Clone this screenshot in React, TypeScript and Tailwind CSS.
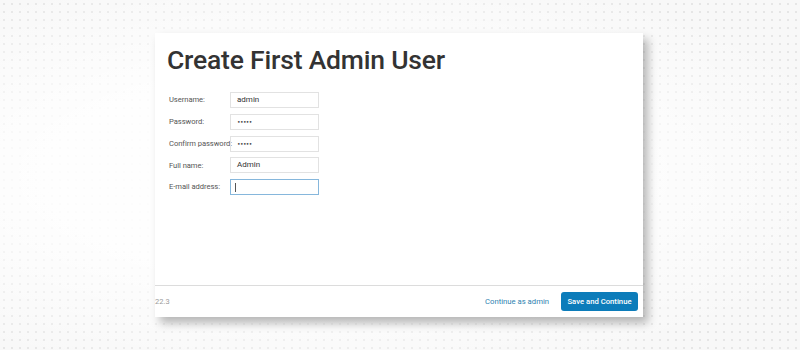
import React from "react";

const rows = [
  { label: "Username:", value: "admin" },
  { label: "Password:", value: "•••••", pw: true },
  { label: "Confirm password:", value: "•••••", pw: true },
  { label: "Full name:", value: "Admin" },
  { label: "E-mail address:", value: "", focus: true },
];

export default function App() {
  return (
    <div
      className="w-[800px] h-[350px] overflow-hidden flex flex-col bg-[#f8f8f8] bg-[radial-gradient(ellipse_70%_60%_at_40%_50%,rgba(255,255,255,1),rgba(255,255,255,0.85)_50%,rgba(255,255,255,0)_100%),radial-gradient(circle,#e6e6e6_1px,transparent_1.4px)] bg-[length:100%_100%,8px_8px]"
      style={{ fontFamily: "Roboto, 'Liberation Sans', Arial, sans-serif" }}
    >
      <div className="ml-[155px] mt-[33px] w-[488px] h-[284px] bg-white shadow-[5px_6px_9px_rgba(0,0,0,0.28)] flex flex-col">
        <div className="flex-1 flex flex-col">
          <h1 className="mt-[10px] ml-[12px] text-[26.5px] leading-[34px] font-medium text-[#333] tracking-[-0.2px] whitespace-nowrap">
            Create First Admin User
          </h1>
          <div className="mt-[15px] ml-[14px] flex flex-col gap-[5.75px]">
            {rows.map((r) => (
              <div key={r.label} className="flex items-center h-[16px]">
                <div className="w-[61px] text-[7.6px] text-[#555] whitespace-nowrap tracking-[-0.05px]">
                  {r.label}
                </div>
                <div
                  className={
                    r.focus
                      ? "w-[89px] h-[16px] border border-[#86b7dc] flex items-center pl-[4px]"
                      : "w-[89px] h-[16px] border border-[#e2e2e2] flex items-center pl-[6px]"
                  }
                >
                  {r.focus ? (
                    <span className="block w-px h-[9px] bg-[#555]" />
                  ) : r.pw ? (
                    <span
                      className="text-[6px] leading-none text-[#444] tracking-[-0.6px]"
                      style={{ fontFamily: "'DejaVu Sans', sans-serif" }}
                    >
                      {r.value}
                    </span>
                  ) : (
                    <span className="text-[8px] text-[#333]">{r.value}</span>
                  )}
                </div>
              </div>
            ))}
          </div>
        </div>
        <div className="h-[32px] border-t border-[#dcdcdc] flex items-center">
          <span className="text-[7.5px] text-[#9a9a9a]">22.3</span>
          <div className="ml-auto flex items-center mr-[5px]">
            <span className="text-[7.7px] text-[#2e7fb0] mr-[12px] whitespace-nowrap">Continue as admin</span>
            <button className="h-[19px] w-[77px] rounded-[3px] bg-[#0c7cba] text-white text-[7.7px] font-medium whitespace-nowrap">
              Save and Continue
            </button>
          </div>
        </div>
      </div>
    </div>
  );
}
